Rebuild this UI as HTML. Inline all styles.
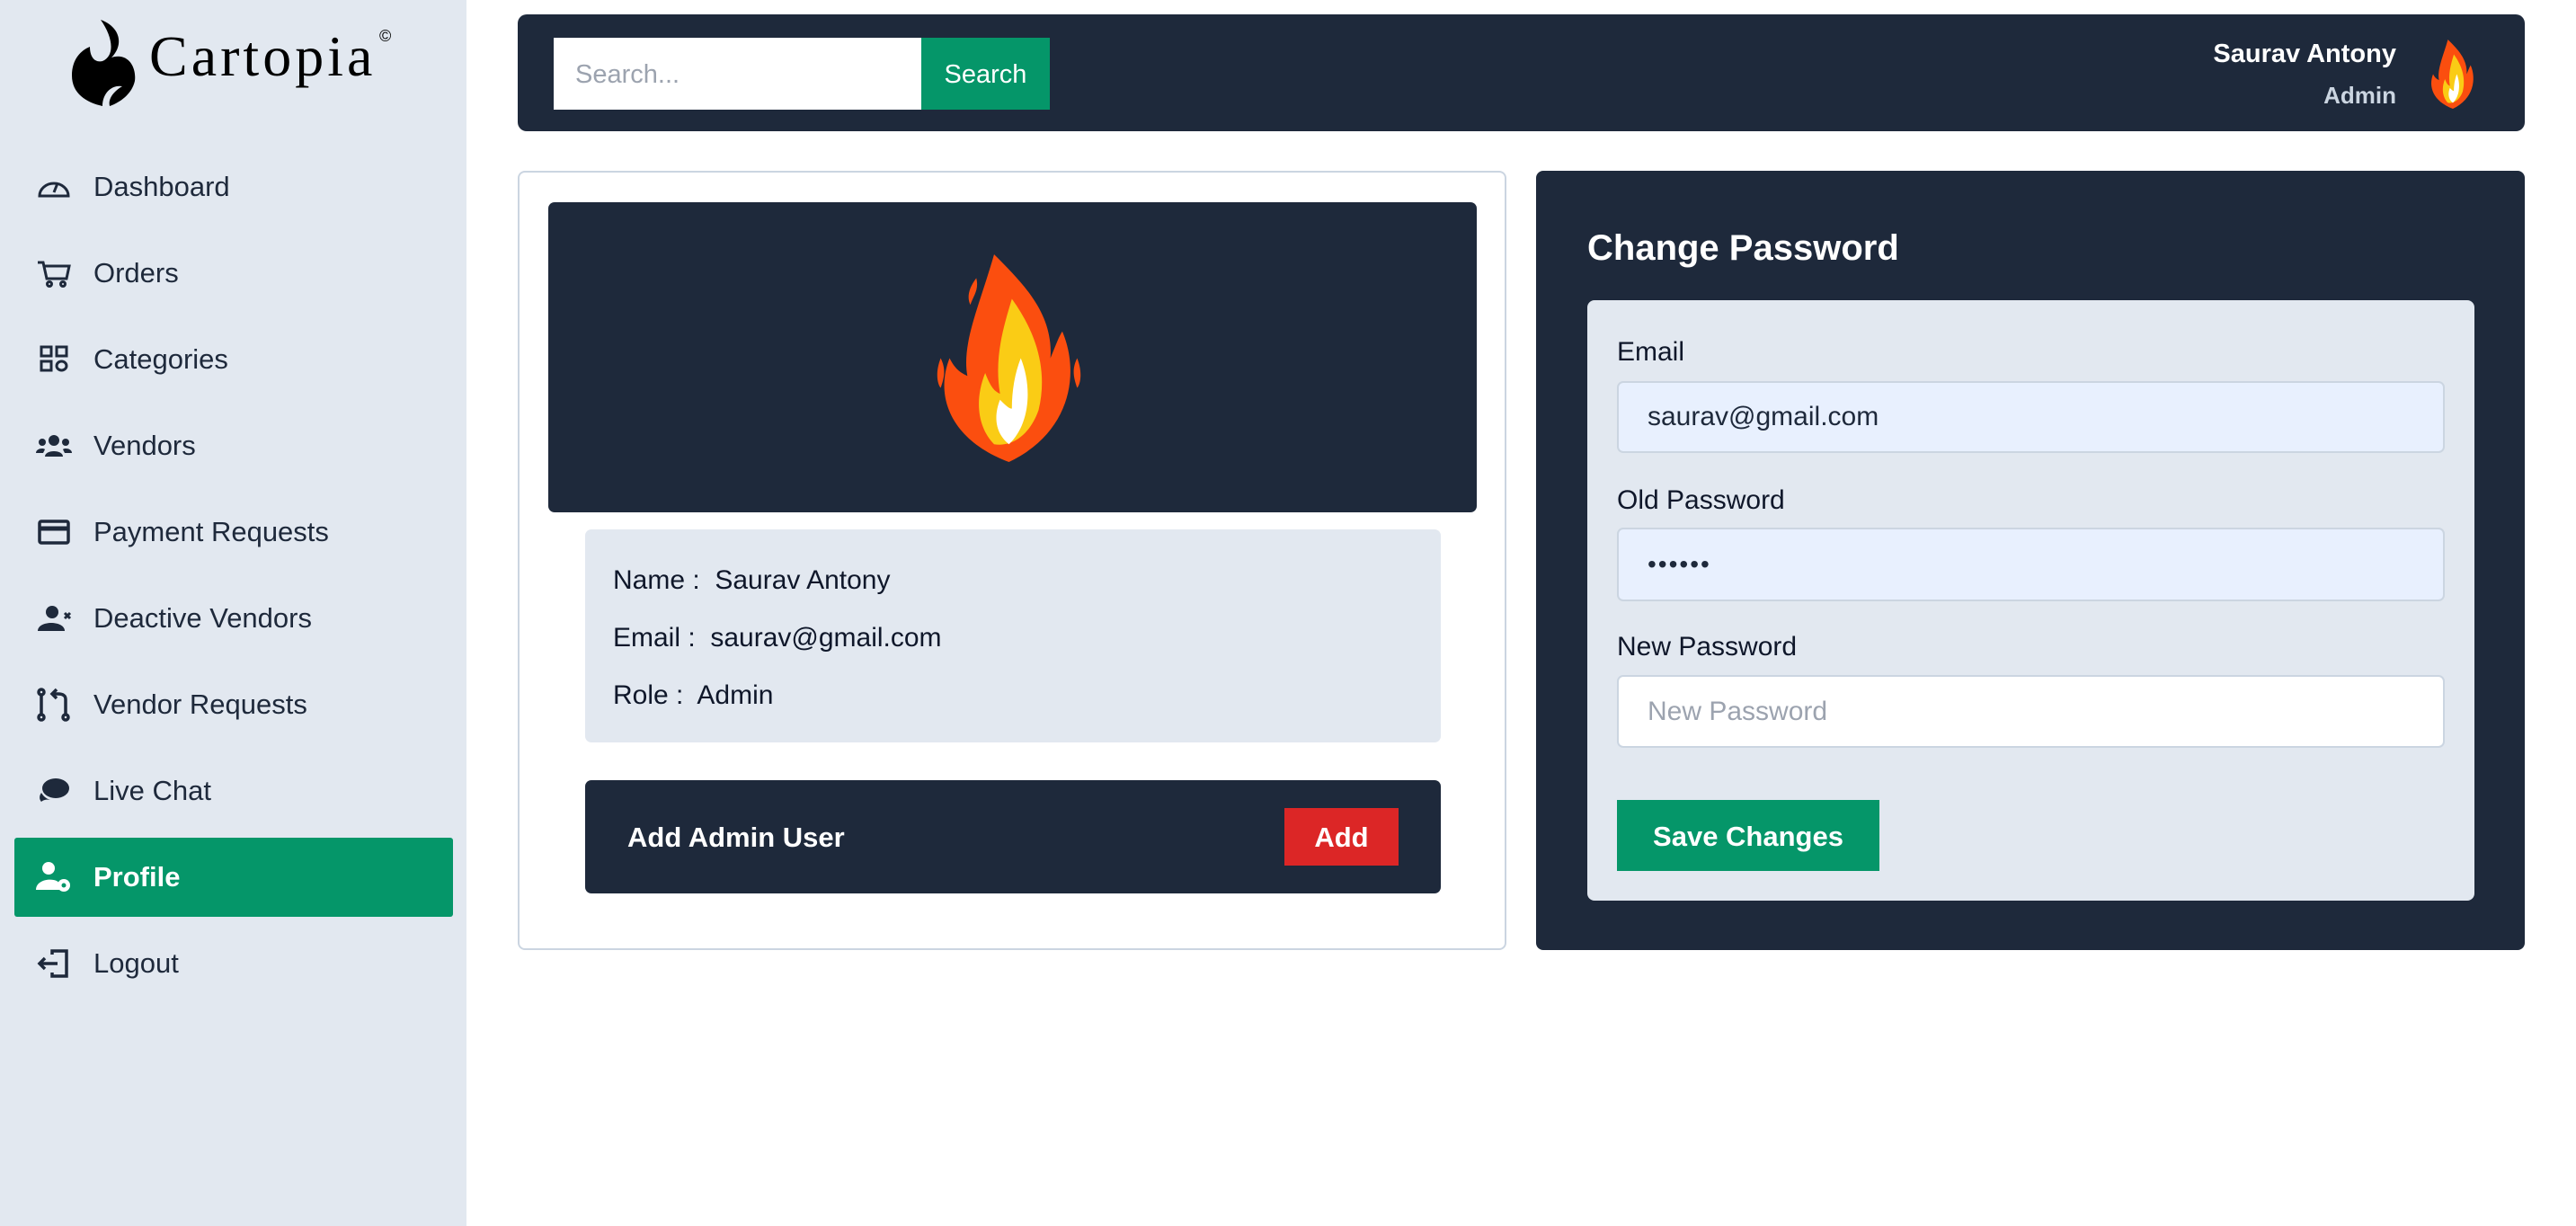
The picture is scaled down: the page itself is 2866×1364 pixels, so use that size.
<!DOCTYPE html>
<html><head><meta charset="utf-8"><style>
*{box-sizing:border-box;margin:0;padding:0}
body{width:2866px;height:1364px;background:#fff;font-family:"Liberation Sans",sans-serif;position:relative;overflow:hidden;color:#1e293b}
.abs{position:absolute}
#side{left:0;top:0;width:519px;height:1364px;background:#e2e8f0}
.nav{position:absolute;left:0;width:519px;height:88px;display:flex;align-items:center;font-size:31px;color:#1e293b}
.nav svg{position:absolute;left:40px;width:40px;height:40px}
.nav span{position:absolute;left:104px;top:26px}
.lbl{font-size:30px;color:#0f172a}
.inp{position:absolute;left:1799px;width:921px;border:2px solid #cbd5e1;border-radius:7px;font-size:30px;display:flex;align-items:center;padding-left:32px}
</style></head><body>
<div id="side" class="abs">
  <svg class="abs" style="left:76px;top:20px" width="80" height="100" viewBox="0 0 80 100"><path d="M36 2 C58 10 62 30 48 44 C66 38 76 54 74 70 C70 88 52 96 46 98 C44 90 50 82 60 76 C48 74 38 84 38 98 C20 94 4 84 4 64 C4 46 14 36 24 32 C24 44 30 50 38 48 C52 42 50 22 36 2Z" fill="#000"/></svg>
  <div class="abs" style="left:166px;top:26px;font-family:'Liberation Serif',serif;font-size:64px;letter-spacing:4px;color:#000">Cartopia</div>
  <div class="abs" style="left:422px;top:30px;font-size:18px;color:#000">©</div>

  <div class="nav" style="top:164px"><svg viewBox="0 0 40 40" fill="none" stroke="#1e293b" stroke-width="3"><path d="M4 30 A16 14 0 1 1 36 30 Z"/><path d="M20 26 L24 16" /></svg><span>Dashboard</span></div>
  <div class="nav" style="top:260px"><svg viewBox="0 0 40 40" fill="none" stroke="#1e293b" stroke-width="3"><path d="M2 8h6l4 18h22l3-14H10"/><circle cx="15" cy="32" r="2.5"/><circle cx="30" cy="32" r="2.5"/></svg><span>Orders</span></div>
  <div class="nav" style="top:356px"><svg viewBox="0 0 40 40" fill="none" stroke="#1e293b" stroke-width="3"><rect x="6" y="6" width="11" height="10"/><rect x="23" y="6" width="11" height="10"/><rect x="6" y="22" width="11" height="10"/><ellipse cx="28.5" cy="27" rx="5.5" ry="5"/></svg><span>Categories</span></div>
  <div class="nav" style="top:452px"><svg viewBox="0 0 40 40" fill="#1e293b"><circle cx="20" cy="14" r="6"/><circle cx="7" cy="16" r="4"/><circle cx="33" cy="16" r="4"/><path d="M10 32c0-8 20-8 20 0z"/><path d="M0 28c0-5 8-6 10-4l-2 4z"/><path d="M40 28c0-5-8-6-10-4l2 4z"/></svg><span>Vendors</span></div>
  <div class="nav" style="top:548px"><svg viewBox="0 0 40 40" fill="none" stroke="#1e293b" stroke-width="3.5"><rect x="4" y="8" width="32" height="24" rx="2"/><path d="M4 16h32" stroke-width="5"/></svg><span>Payment Requests</span></div>
  <div class="nav" style="top:644px"><svg viewBox="0 0 40 40" fill="#1e293b"><circle cx="18" cy="13" r="7"/><path d="M2 34c0-12 30-12 30 0z"/><path d="M32 14l6 6M38 14l-6 6" stroke="#1e293b" stroke-width="3"/></svg><span>Deactive Vendors</span></div>
  <div class="nav" style="top:740px"><svg viewBox="0 0 40 40" fill="none" stroke="#1e293b" stroke-width="3.5"><circle cx="6" cy="6" r="3"/><circle cx="6" cy="34" r="3"/><path d="M6 9v22"/><circle cx="33" cy="34" r="3"/><path d="M33 31V14c0-4-3-6-8-6h-6"/><path d="M23 3l-5 5 5 5"/></svg><span>Vendor Requests</span></div>
  <div class="nav" style="top:836px"><svg viewBox="0 0 40 40" fill="#1e293b"><ellipse cx="22" cy="17" rx="15" ry="11"/><path d="M6 22c-3 4-2 8 0 10 2-2 6-3 10-2 -6-2-8-5-10-8z"/></svg><span>Live Chat</span></div>
  <div class="abs" style="left:16px;top:932px;width:488px;height:88px;background:#059669;border-radius:3px"></div>
  <div class="nav" style="top:932px;color:#fff;font-weight:bold"><svg viewBox="0 0 40 40" fill="#fff"><circle cx="14" cy="10" r="7"/><path d="M0 34c0-14 26-14 26-6v6z"/><circle cx="31" cy="29" r="7"/><circle cx="31" cy="29" r="2.5" fill="#059669"/></svg><span>Profile</span></div>
  <div class="nav" style="top:1028px"><svg viewBox="0 0 40 40" fill="none" stroke="#1e293b" stroke-width="3.5"><path d="M18 10V6h16v28H18v-4"/><path d="M24 20H4M10 14l-6 6 6 6"/></svg><span>Logout</span></div>
</div>

<div class="abs" style="left:576px;top:16px;width:2233px;height:130px;background:#1e293b;border-radius:10px"></div>
<div class="abs" style="left:616px;top:42px;width:409px;height:80px;background:#fff;font-size:29px;color:#9ca3af;padding:25px 0 0 24px">Search...</div>
<div class="abs" style="left:1025px;top:42px;width:143px;height:80px;background:#059669;color:#fff;font-size:29px;text-align:center;line-height:82px">Search</div>
<div class="abs" style="right:200px;top:44px;font-size:29px;color:#fff;font-weight:bold">Saurav Antony</div>
<div class="abs" style="right:200px;top:91px;font-size:26px;color:#cbd5e1;font-weight:bold">Admin</div>
<svg class="abs" style="left:2698px;top:44px" width="62" height="77" viewBox="0 0 100 140"><path d="M40 0C60 20 80 40 78 70 82 60 84 55 86 52 98 80 92 120 50 140 10 125 0 95 10 70 14 78 18 80 22 82 18 60 30 35 40 0Z" fill="#fb4e0f"/><path d="M52 30C70 55 76 80 70 105 64 122 52 130 40 128 30 118 26 100 34 80 38 90 40 92 44 94 40 70 46 50 52 30Z" fill="#facc15"/><path d="M58 70C66 90 64 115 50 128 40 120 40 108 44 98 48 102 50 104 52 104 52 92 54 80 58 70Z" fill="#fff"/></svg>

<div class="abs" style="left:576px;top:190px;width:1100px;height:867px;border:2px solid #cbd5e1;border-radius:8px"></div>
<div class="abs" style="left:610px;top:225px;width:1033px;height:345px;background:#1e293b;border-radius:7px"></div>
<svg class="abs" style="left:1040px;top:280px" width="165" height="237" viewBox="0 0 100 140"><path d="M40 0C60 20 80 40 78 70 82 60 84 55 86 52 98 80 92 120 50 140 10 125 0 95 10 70 14 78 18 80 22 82 18 60 30 35 40 0Z" fill="#fb4e0f"/><path d="M52 30C70 55 76 80 70 105 64 122 52 130 40 128 30 118 26 100 34 80 38 90 40 92 44 94 40 70 46 50 52 30Z" fill="#facc15"/><path d="M58 70C66 90 64 115 50 128 40 120 40 108 44 98 48 102 50 104 52 104 52 92 54 80 58 70Z" fill="#fff"/><path d="M4 70C0 80 2 88 4 90 6 84 8 78 4 70Z M96 70C100 80 98 88 96 90 94 84 92 78 96 70Z M28 16C22 24 22 30 24 34 26 28 30 24 28 16Z" fill="#fb4e0f"/></svg>
<div class="abs" style="left:651px;top:589px;width:952px;height:237px;background:#e2e8f0;border-radius:7px"></div>
<div class="abs" style="left:682px;top:614px;font-size:30px;color:#0f172a;line-height:64px">Name :&nbsp; Saurav Antony<br>Email :&nbsp; saurav@gmail.com<br>Role :&nbsp; Admin</div>
<div class="abs" style="left:651px;top:868px;width:952px;height:126px;background:#1e293b;border-radius:7px"></div>
<div class="abs" style="left:698px;top:914px;font-size:31px;color:#fff;font-weight:bold">Add Admin User</div>
<div class="abs" style="left:1429px;top:899px;width:127px;height:64px;background:#dc2626;color:#fff;font-size:31px;font-weight:bold;text-align:center;line-height:66px">Add</div>

<div class="abs" style="left:1709px;top:190px;width:1100px;height:867px;background:#1e293b;border-radius:8px"></div>
<div class="abs" style="left:1766px;top:254px;font-size:40px;color:#fff;font-weight:bold">Change Password</div>
<div class="abs" style="left:1766px;top:334px;width:987px;height:668px;background:#e2e8f0;border-radius:8px"></div>
<div class="abs lbl" style="left:1799px;top:375px">Email</div>
<div class="inp" style="top:424px;height:80px;background:#e8f0fe">saurav@gmail.com</div>
<div class="abs lbl" style="left:1799px;top:540px">Old Password</div>
<div class="inp" style="top:587px;height:82px;background:#e8f0fe;font-size:28px;letter-spacing:2px">••••••</div>
<div class="abs lbl" style="left:1799px;top:703px">New Password</div>
<div class="inp" style="top:751px;height:81px;background:#fff;color:#9ca3af">New Password</div>
<div class="abs" style="left:1799px;top:890px;width:292px;height:79px;background:#059669;color:#fff;font-size:31px;font-weight:bold;text-align:center;line-height:81px">Save Changes</div>
</body></html>
